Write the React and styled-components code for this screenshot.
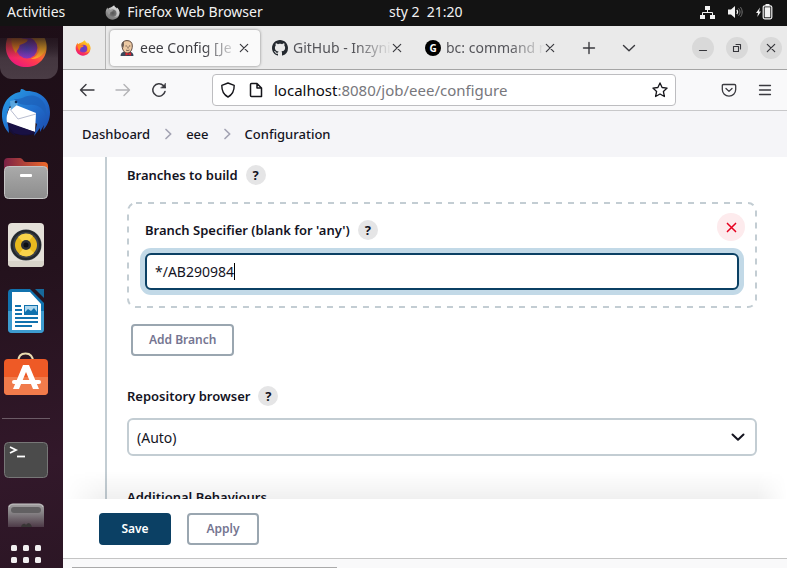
import React, { useState } from "react";
import styled, { createGlobalStyle, css } from "styled-components";

const Global = createGlobalStyle`
  *, *::before, *::after { box-sizing: border-box; }
  body { margin: 0; font-family: "Noto Sans", "Open Sans", sans-serif; font-size: 14px; color: #14141f; }
  button, input, select { font-family: inherit; }
  svg { display: block; flex: none; }
`;

const Desktop = styled.div`
  height: 100vh;
  display: grid;
  grid-template-rows: 26px minmax(0, 1fr);
  grid-template-columns: 63px minmax(0, 1fr);
  overflow: hidden;
`;

/* ---------- top panel ---------- */
const Panel = styled.header`
  grid-column: 1 / -1;
  display: grid;
  grid-template-columns: 382px 1fr auto;
  align-items: center;
  padding: 0 14px 2px 7px;
  background: #131313;
  color: #f2f2f2;
`;
const PanelGroup = styled.div`
  display: flex;
  align-items: center;
  gap: ${(p) => p.$gap}px;
`;
const PanelButton = styled.button`
  display: flex;
  align-items: center;
  gap: 7px;
  border: 0;
  padding: 0;
  background: none;
  color: inherit;
  font-size: 14px;
  line-height: 24px;
  white-space: pre;
`;

/* ---------- dock ---------- */
const Dock = styled.nav`
  display: flex;
  flex-direction: column;
  padding-top: 12px;
  background: linear-gradient(170deg, #1d0e17 0%, #24121d 45%, #32182a 80%, #2c1625 100%);
  overflow: hidden;
`;
const DockItem = styled.button`
  flex: none;
  display: flex;
  align-items: center;
  justify-content: center;
  width: 52px;
  height: 66px;
  padding: 0;
  border: 0;
  background: none;
`;
const ActiveDockItem = styled(DockItem)`
  position: relative;
  align-items: flex-start;
  width: 58px;
  height: 41px;
  margin-bottom: 1px;
  padding-right: 6px;
  border-radius: 0 0 12px 12px;
  background: linear-gradient(#2c1f28, #44363f 50%, #4a3c45);
  overflow: hidden;
  &::after {
    content: "";
    position: absolute;
    inset: 0 0 auto;
    height: 20px;
    background: linear-gradient(#22141dcc, #22141d00);
  }
`;
const DockFirefox = styled.span`
  display: block;
  margin-top: -14px;
`;
const DockRule = styled.hr`
  flex: none;
  width: 48px;
  height: 1px;
  margin: 8px 0 8px 2px;
  border: 0;
  background: #6b5b66;
`;
const TrashItem = styled(DockItem)`
  height: 24px;
  margin-top: 10px;
`;
const AppsItem = styled(DockItem)`
  height: 24px;
  margin-top: 17px;
`;

/* ---------- browser ---------- */
const Browser = styled.div`
  display: flex;
  flex-direction: column;
  min-width: 0;
  min-height: 0;
  background: #f9f9fa;
`;
const TabStrip = styled.div`
  flex: none;
  display: flex;
  align-items: center;
  height: 44px;
  background: #eaeaea;
  border-bottom: 1px solid #a5a5a5;
`;
const PinnedTab = styled.button`
  align-self: stretch;
  display: flex;
  align-items: center;
  justify-content: center;
  width: 43px;
  padding: 0 3px 0 0;
  margin-right: 4px;
  border: 0;
  border-right: 1px solid #b5b5b5;
  background: none;
`;
const Tab = styled.div`
  display: flex;
  align-items: center;
  width: 150px;
  height: 36px;
  margin-right: 3px;
  padding: 0 11px 0 9px;
  border-radius: 4px;
  color: #55555a;
  ${(p) =>
    p.$active &&
    css`
      background: #fafafa;
      color: #3d3d42;
      box-shadow: 0 0 3px #00000075;
    `}
`;
const TabTitle = styled.button`
  flex: 1;
  min-width: 0;
  padding: 0 0 0 5px;
  border: 0;
  background: none;
  color: inherit;
  font-size: 14px;
  line-height: 24px;
  text-align: left;
  white-space: nowrap;
  mask-image: linear-gradient(90deg, #000 calc(100% - 36px), transparent);
`;
const IconButton = styled.button`
  flex: none;
  display: flex;
  align-items: center;
  justify-content: center;
  width: ${(p) => p.$w}px;
  height: 24px;
  padding: 0;
  border: 0;
  background: none;
  color: ${(p) => p.$color || "#3a3a3f"};
`;
const WindowButtons = styled.div`
  display: flex;
  gap: 12px;
  margin-left: auto;
  padding-right: 5px;
`;
const WindowButton = styled.button`
  display: flex;
  align-items: center;
  justify-content: center;
  width: 22px;
  height: 22px;
  padding: 0;
  border: 0;
  border-radius: 50%;
  background: #d9d9d9;
  color: #35353a;
`;
const NavBar = styled.div`
  flex: none;
  display: flex;
  align-items: center;
  height: 41px;
  padding: 0 4px 0 6px;
  border-bottom: 1px solid #c8c8ca;
`;
const NavGroup = styled.div`
  display: flex;
  width: ${(p) => p.$w}px;
  justify-content: ${(p) => p.$justify || "flex-start"};
`;
const AddressBox = styled.div`
  flex: 1;
  display: flex;
  align-items: center;
  height: 32px;
  min-width: 0;
  padding: 0 7px;
  border: 1px solid #bdbdc0;
  border-radius: 4px;
  background: #fff;
  color: #15151a;
`;
const Address = styled.a`
  flex: 1;
  min-width: 0;
  margin-left: 10px;
  color: #77777c;
  font-size: 15px;
  line-height: 24px;
  text-decoration: none;
  white-space: nowrap;
  overflow: hidden;
`;
const Host = styled.span`
  color: #0c0c10;
`;
const FindBar = styled.div`
  flex: none;
  height: 10px;
  padding: 8px 0 0 9px;
  border-top: 1px solid #c4c4c4;
  background: #f9f9fa;
`;
const FindField = styled.div`
  width: 37%;
  height: 2px;
  border-top: 1px solid #aaa;
`;

/* ---------- page ---------- */
const Page = styled.main`
  flex: 1;
  min-height: 0;
  display: flex;
  flex-direction: column;
  background: #fff;
`;
const Crumbs = styled.nav`
  flex: none;
  display: flex;
  align-items: center;
  gap: 12px;
  height: 46px;
  padding: 0 19px;
  background: #f5f5f8;
  color: #a3a3b3;
`;
const Crumb = styled.a`
  color: #14141f;
  font-size: 13px;
  font-weight: 500;
  line-height: 20px;
  text-decoration: none;
`;
const Scroller = styled.div`
  flex: 1;
  min-height: 0;
  overflow: hidden;
  padding: 0 30px 0 42px;
`;
const Section = styled.section`
  padding: 8px 0 40px 20px;
  border-left: 2px solid #c3cdd3;
`;
const LabelRow = styled.div`
  display: flex;
  align-items: center;
  gap: 8px;
  height: 20px;
  margin-top: ${(p) => p.$top || 0}px;
`;
const Label = styled.label`
  font-size: 13px;
  font-weight: 600;
  line-height: 20px;
  white-space: nowrap;
`;
const Help = styled.button`
  width: 20px;
  height: 20px;
  padding: 0;
  border: 0;
  border-radius: 50%;
  background: #e5e5e6;
  color: #14141f;
  font-size: 13px;
  font-weight: 700;
  line-height: 20px;
`;
const BranchBox = styled.div`
  position: relative;
  margin-top: 17px;
  padding: 2px;
`;
const BranchBody = styled.div`
  padding: 16px;
`;
const Dashes = styled.svg`
  position: absolute;
  inset: 0;
  width: 100%;
  height: 100%;
  pointer-events: none;
`;
const DashRect = styled.rect`
  width: calc(100% - 2px);
  height: calc(100% - 2px);
  fill: none;
  stroke: #c3cdd3;
  stroke-width: 2px;
  stroke-dasharray: 6 6;
`;
const Remove = styled.button`
  position: absolute;
  top: 11px;
  right: 12px;
  display: flex;
  align-items: center;
  justify-content: center;
  width: 28px;
  height: 28px;
  padding: 0;
  border: 0;
  border-radius: 50%;
  background: #fdebed;
  color: #e6001f;
`;
const Field = styled.div`
  display: flex;
  align-items: center;
  height: 37px;
  margin-top: 13px;
  padding: 0 8px;
  border: 2px solid #0b4064;
  border-radius: 6px;
  background: #fff;
  box-shadow: 0 0 0 5px #c2d9e7;
`;
const FieldInput = styled.input`
  field-sizing: content;
  min-width: 20px;
  max-width: 100%;
  padding: 0;
  border: 0;
  outline: 0;
  background: none;
  color: #14141f;
  font-size: 14px;
  line-height: 20px;
`;
const Caret = styled.span`
  width: 1px;
  height: 17px;
  background: #000;
`;
const ActionButton = styled.button`
  height: 32px;
  min-width: 72px;
  padding: 0 16px;
  border: 2px solid ${(p) => (p.$primary ? "#0b4064" : "#9aa6b0")};
  border-radius: 4px;
  background: ${(p) => (p.$primary ? "#0b4064" : "#fff")};
  color: ${(p) => (p.$primary ? "#fff" : "#757591")};
  font-size: 12px;
  font-weight: 600;
  line-height: 20px;
`;
const AddRow = styled.div`
  margin: 16px 4px 0;
`;
const SelectWrap = styled.div`
  display: grid;
  align-items: center;
  margin-top: 12px;
  & > * {
    grid-area: 1 / 1;
  }
  & > svg {
    justify-self: end;
    margin-right: 12px;
    pointer-events: none;
  }
`;
const Select = styled.select`
  appearance: none;
  width: 100%;
  height: 38px;
  padding: 0 8px;
  border: 2px solid #c3cdd3;
  border-radius: 6px;
  background: #fff;
  color: #14141f;
  font-size: 14px;
`;
const StickyBar = styled.footer`
  position: relative;
  flex: none;
  display: flex;
  gap: 16px;
  height: 59px;
  padding: 14px 36px;
  background: #fff;
  &::before {
    content: "";
    position: absolute;
    left: 0;
    right: 0;
    bottom: 100%;
    height: 28px;
    background: linear-gradient(#00000000, #0000000f);
    mask-image: linear-gradient(90deg, transparent, #000 44px, #000 calc(100% - 30px), transparent);
    pointer-events: none;
  }
`;

/* ---------- drawings ---------- */
const Stroke = ({ size, w = 1.5, box = 16, children }) => (
  <svg width={size} height={size} viewBox={`0 0 ${box} ${box}`} fill="none" stroke="currentColor" strokeWidth={w} strokeLinecap="round" strokeLinejoin="round" aria-hidden="true">
    {children}
  </svg>
);
const Cross = ({ size = 10, w = 1.2 }) => (
  <Stroke size={size} w={w} box={10}><path d="M1.3 1.3l7.4 7.4M8.7 1.3L1.3 8.7" /></Stroke>
);
const ChevronRight = () => (
  <Stroke size={12} w={1.7} box={12}><path d="M4 1.5L8.7 6 4 10.5" /></Stroke>
);
const ChevronDown = ({ w = 1.4 }) => (
  <Stroke size={14} w={w} box={14}><path d="M1.5 4.5L7 9.8l5.500-5.300" /></Stroke>
);

const Firefox = ({ size, id, gray }) => (
  <svg width={size} height={size} viewBox="0 0 48 48" aria-hidden="true">
    <defs>
      <linearGradient id={id + "a"} x1=".8" y1="0" x2=".25" y2="1">
        <stop offset="0" stopColor={gray ? "#eee" : "#ffe226"} />
        <stop offset=".4" stopColor={gray ? "#bbb" : "#ff9a1f"} />
        <stop offset=".7" stopColor={gray ? "#888" : "#ff3b4e"} />
        <stop offset="1" stopColor={gray ? "#777" : "#e91580"} />
      </linearGradient>
      <radialGradient id={id + "b"}>
        <stop offset="0" stopColor={gray ? "#555" : "#5148c8"} />
        <stop offset="1" stopColor={gray ? "#777" : "#8a35b8"} />
      </radialGradient>
    </defs>
    <path d="M29 1c1 5 5 7 9 11 0-2 0-3-.5-5 6 5 9 11 9 18 0 13-10 22-22.500 22S2 37 2 25C2 18 4 13 8 8c0 2 .5 3 1.500 5C12 10 14 9 18 8c4-1 7-4 11-7z" fill={`url(#${id}a)`} />
    <circle cx="25" cy="26" r="11.500" fill={`url(#${id}b)`} />
    <path d="M9 13c3-1 7 0 9 3 3 0 6 0 8 1-1 4-5 4-9 6 0 4-3 5-4 9-4-5-6-12-4-19z" fill={gray ? "#999" : "#ff8a1c"} />
    <path d="M29 1c1 8 9 11 10 22 .5 7-3 13-10 15 9 1 16-5 17-14C45 15 35 12 29 1z" fill={gray ? "#ccc" : "#ffb824"} opacity=".75" />
  </svg>
);
const Jenkins = () => (
  <svg width="16" height="16" viewBox="0 0 16 16" aria-hidden="true">
    <path d="M1.500 16c0-3 2-4 4-4.500h5c2.500.5 4 2 4 4.500z" fill="#37475a" />
    <path d="M3 6C2.500 2.500 5 .6 8 .6c3.300 0 5.500 2 5.300 5.400 0 4-2 7-5 7C5.500 13 3.500 10.500 3 6z" fill="#ecc9a3" stroke="#4d3a32" strokeWidth=".9" />
    <path d="M3 7c-.8-3 .2-5 1.800-5.700L5 5l-.8 3z" fill="#675a53" />
    <path d="M6.500 6h1.300M10 6h1.300M7 10c1 .7 2.500.6 3.500 0M9 6.500v2" stroke="#4d3a32" strokeWidth=".8" fill="none" />
    <path d="M6.500 12.300l2.700 1.400 2.900-1.400v3.500l-2.900-1.200-2.700 1.200z" fill="#d9232e" />
  </svg>
);
const GitHub = () => (
  <svg width="16" height="16" viewBox="0 0 16 16" fill="#24292f" aria-hidden="true">
    <path d="M8 0C3.580 0 0 3.580 0 8c0 3.540 2.290 6.530 5.470 7.590.4.070.55-.17.55-.38 0-.19-.01-.82-.01-1.490-2.010.37-2.530-.49-2.690-.94-.09-.23-.48-.94-.82-1.130-.28-.15-.68-.52-.01-.53.63-.01 1.080.58 1.230.82.72 1.210 1.870.87 2.330.66.070-.52.28-.87.51-1.070-1.780-.2-3.640-.89-3.640-3.950 0-.87.31-1.590.82-2.150-.08-.2-.36-1.020.08-2.120 0 0 .67-.21 2.200.82.64-.18 1.320-.27 2-.27s1.360.09 2 .27c1.530-1.040 2.200-.82 2.200-.82.44 1.100.16 1.920.08 2.120.51.56.82 1.270.82 2.150 0 3.070-1.870 3.750-3.650 3.950.29.25.54.73.54 1.480 0 1.070-.01 1.930-.01 2.200 0 .21.15.46.55.38A8 8 0 0 0 16 8c0-4.420-3.580-8-8-8z" />
  </svg>
);
const GMark = styled.span`
  flex: none;
  width: 16px;
  height: 16px;
  border-radius: 50%;
  background: #000;
  color: #fff;
  font-size: 10px;
  font-weight: 700;
  line-height: 16px;
  text-align: center;
`;
const Network = () => (
  <svg width="15" height="13" viewBox="0 0 15 13" fill="#f2f2f2" aria-hidden="true">
    <path d="M5 0h5v4H5zM0 9h5v4H0zM10 9h5v4h-5z" />
    <path d="M7.500 4v2.500M2.500 9V6.500h10V9" fill="none" stroke="#f2f2f2" />
  </svg>
);
const Volume = () => (
  <svg width="15" height="14" viewBox="0 0 15 14" aria-hidden="true">
    <path d="M0 4.500h3L7 1v12L3 9.500H0z" fill="#f2f2f2" />
    <path d="M8.800 5c1 1.200 1 2.800 0 4" fill="none" stroke="#f2f2f2" strokeWidth="1.200" />
    <path d="M10.500 3.300c2 2.200 2 5.200 0 7.400M12.500 2.200c2.200 3 2.200 6.600 0 9.600" fill="none" stroke="#777" />
  </svg>
);
const Battery = () => (
  <svg width="17" height="16" viewBox="0 0 17 16" aria-hidden="true">
    <path d="M4 3.500L0 9h2l-.7 4L5 7.500H3z" fill="#f2f2f2" />
    <path d="M9.500 0h4v2h-4z" fill="#f2f2f2" />
    <rect x="7.200" y="1.800" width="8.600" height="13" rx="1.500" fill="none" stroke="#f2f2f2" strokeWidth="1.200" />
    <rect x="8.700" y="3.300" width="5.600" height="10" fill="#f2f2f2" />
  </svg>
);
const Thunderbird = () => (
  <svg width="48" height="48" viewBox="0 0 48 48" aria-hidden="true">
    <defs>
      <linearGradient id="tb" x1="0" y1="0" x2="1" y2="1">
        <stop offset="0" stopColor="#2aa1e6" />
        <stop offset=".5" stopColor="#2172d0" />
        <stop offset="1" stopColor="#1b47a8" />
      </linearGradient>
    </defs>
    <path d="M1 15C-2 27 2 41 14 47l-2-3c6 3 17 4 24-1z" fill="#160f38" />
    <path d="M19 0c3 0 4 2 6 2 14 0 23 9 23 21 0 8-3 14-7 18l1-5-4 7v-4l-6 8 3-12L8 17 5 24l2 20C0 37-2 25 2 16 5 8 12 4 18 3z" fill="url(#tb)" />
    <path d="M12 10c9 1 12-5 21-3 9 3 12 10 11 20-3-8-8-12-17-11-7 0-11-1-15-6z" fill="#1d5fb8" opacity=".7" />
    <path d="M8 19l6-3 20 8-1 19-28-9c-1-5 0-11 3-15z" fill="#fff" />
    <path d="M5 33l28 10c-5 3-14 4-21 1-3-3-6-7-7-11z" fill="#191144" />
    <path d="M7 19l9 11 18-5" fill="none" stroke="#b8bdd0" />
    <path d="M8 12l5-1 3 4-7 6z" fill="#5aa7df" />
    <circle cx="14" cy="13" r="1.300" fill="#0b2b55" />
  </svg>
);
const Files = () => (
  <svg width="46" height="42" viewBox="0 0 46 42" aria-hidden="true">
    <defs>
      <linearGradient id="fa"><stop stopColor="#7b2146" /><stop offset="1" stopColor="#ef6a2a" /></linearGradient>
      <linearGradient id="fb" x1="0" y1="0" x2="0" y2="1"><stop stopColor="#aaa" /><stop offset="1" stopColor="#8d8d8d" /></linearGradient>
    </defs>
    <path d="M1 4a4 4 0 0 1 4-4h12c3 0 3 4 6 4h18a4 4 0 0 1 4 4v12H1z" fill="url(#fa)" />
    <rect x="1.500" y="8.500" width="43" height="32" rx="4" fill="url(#fb)" stroke="#c6c6c6" />
    <rect x="17" y="16" width="12" height="3" rx="1" fill="#fff" />
  </svg>
);
const Rhythmbox = () => (
  <svg width="36" height="44" viewBox="0 0 36 44" aria-hidden="true">
    <rect width="36" height="44" rx="4" fill="#e4e0d8" />
    <path d="M0 38h36v2a4 4 0 0 1-4 4H4a4 4 0 0 1-4-4z" fill="#d8d4ca" />
    <circle cx="18" cy="22" r="15.500" fill="#3b4047" />
    <circle cx="18" cy="22" r="14" fill="none" stroke="#22262b" strokeWidth="2" />
    <circle cx="18" cy="22" r="11" fill="#e8b91e" />
    <path d="M18 22L10 14a11 11 0 0 1 15-1zM18 22l8 8a11 11 0 0 1-15 1z" fill="#f8d34a" />
    <circle cx="18" cy="22" r="5" fill="#2b2f35" />
    <circle cx="18" cy="22" r="2.500" fill="#0d0f12" />
  </svg>
);
const Writer = () => (
  <svg width="36" height="44" viewBox="0 0 36 44" aria-hidden="true">
    <path d="M4 0h18l14 14v26a4 4 0 0 1-4 4H4a4 4 0 0 1-4-4V4a4 4 0 0 1 4-4z" fill="#1172ae" />
    <path d="M0 22h36v18a4 4 0 0 1-4 4H4a4 4 0 0 1-4-4z" fill="#3d9bcf" />
    <path d="M4 3h18l11 12v26H4z" fill="#fff" />
    <path d="M27 0h9v9z" fill="#17699b" />
    <path d="M7 17h6M7 21h7M7 25h7M7 29h23M7 33h23M7 37h17" stroke="#1172ae" strokeWidth="1.800" />
    <rect x="16.500" y="16.500" width="13" height="9" fill="#aed7ee" stroke="#1172ae" />
    <path d="M17 25v-2l3-3 3 2 3-3 3 4v2z" fill="#1172ae" />
  </svg>
);
const Software = () => (
  <svg width="46" height="50" viewBox="0 0 46 50" aria-hidden="true">
    <path d="M15.500 10C15 4 18 1.500 22.500 1.500S30 4 30 10" fill="none" stroke="#eadbb0" strokeWidth="2" />
    <rect x="1" y="7" width="44" height="36" rx="4" fill="#ee5a26" />
    <path d="M1 25h44v14a4 4 0 0 1-4 4H5a4 4 0 0 1-4-4z" fill="#f17b4b" />
    <path d="M20 13h6l10 24h-6l-7-17-7 17h-6z" fill="#fff" />
    <path d="M11 30h25" stroke="#fff" strokeWidth="4" strokeLinecap="round" />
  </svg>
);
const Terminal = () => (
  <svg width="46" height="38" viewBox="0 0 46 38" aria-hidden="true">
    <rect x="1.500" y="1.500" width="43" height="35" rx="4" fill="#4b4b4b" stroke="#777" />
    <path d="M7 6l6 3-6 3" fill="none" stroke="#fff" strokeWidth="1.800" />
    <path d="M14 15.500h8" stroke="#fff" strokeWidth="1.800" />
  </svg>
);
const Trash = () => (
  <svg width="36" height="24" viewBox="0 0 36 24" aria-hidden="true">
    <defs>
      <linearGradient id="tr" x1="0" y1="0" x2="0" y2="1"><stop stopColor="#a2a0a1" /><stop offset=".4" stopColor="#858184" /><stop offset="1" stopColor="#4d3a47" /></linearGradient>
    </defs>
    <path d="M0 24V5a4 4 0 0 1 4-4h28a4 4 0 0 1 4 4v19z" fill="url(#tr)" />
    <path d="M1 4c1-2 2-3 4-3h26c2 0 3 1 4 3" stroke="#c8c8c8" fill="none" />
    <rect x="3" y="4" width="30" height="6" rx="3" fill="#626062" />
    <path d="M13 24c1-4 4-4 5-2 2-3 5-2 6 2z" fill="#383535" />
  </svg>
);
const AppGrid = () => (
  <svg width="32" height="24" viewBox="0 0 32 24" fill="#f1eff0" aria-hidden="true">
    {[1, 13, 25].map((x) => [1, 13].map((y) => <rect key={x + "-" + y} x={x} y={y} width="6" height="6" rx="1.500" />))}
  </svg>
);

const TABS = [
  { title: "eee Config [Je", icon: <Jenkins />, active: true },
  { title: "GitHub - Inzyni", icon: <GitHub /> },
  { title: "bc: command n", icon: <GMark>G</GMark> },
];
const DOCK = [
  ["Thunderbird", Thunderbird],
  ["Files", Files],
  ["Rhythmbox", Rhythmbox],
  ["LibreOffice Writer", Writer],
  ["Ubuntu Software", Software],
];

export default function App() {
  const [branch, setBranch] = useState("*/AB290984");
  return (
    <Desktop>
      <Global />
      <Panel>
        <PanelGroup $gap={40}>
          <PanelButton>Activities</PanelButton>
          <PanelButton><Firefox size={15} id="fp" gray />Firefox Web Browser</PanelButton>
        </PanelGroup>
        <PanelButton>{"sty 2  21:20"}</PanelButton>
        <PanelGroup $gap={13}><Network /><Volume /><Battery /></PanelGroup>
      </Panel>

      <Dock aria-label="Dock">
        <ActiveDockItem aria-label="Firefox"><DockFirefox><Firefox size={44} id="fd" /></DockFirefox></ActiveDockItem>
        {DOCK.map(([name, Icon]) => <DockItem key={name} aria-label={name}><Icon /></DockItem>)}
        <DockRule />
        <DockItem aria-label="Terminal"><Terminal /></DockItem>
        <TrashItem aria-label="Trash"><Trash /></TrashItem>
        <AppsItem aria-label="Show applications"><AppGrid /></AppsItem>
      </Dock>

      <Browser>
        <TabStrip>
          <PinnedTab aria-label="Firefox View"><Firefox size={16} id="ft" /></PinnedTab>
          {TABS.map((t) => (
            <Tab key={t.title} $active={t.active}>
              {t.icon}
              <TabTitle>{t.title}</TabTitle>
              <IconButton $w={10} aria-label="Close tab"><Cross /></IconButton>
            </Tab>
          ))}
          <IconButton $w={40} aria-label="New tab"><Stroke size={14} w={1.4} box={14}><path d="M7 1.500v11M1.500 7h11" /></Stroke></IconButton>
          <IconButton $w={40} aria-label="List all tabs"><ChevronDown /></IconButton>
          <WindowButtons>
            <WindowButton aria-label="Minimize"><Stroke size={10} w={1.200} box={10}><path d="M1.500 7.500h7" /></Stroke></WindowButton>
            <WindowButton aria-label="Restore"><Stroke size={10} w={1.100} box={10}><path d="M1.500 3.500h5v5h-5zM4 1.500h4.500V6" /></Stroke></WindowButton>
            <WindowButton aria-label="Close"><Cross /></WindowButton>
          </WindowButtons>
        </TabStrip>
        <NavBar>
          <NavGroup $w={143}>
            <IconButton $w={36} aria-label="Back"><Stroke size={16} w={1.400}><path d="M15 8H1.500M7 2.500L1.500 8 7 13.500" /></Stroke></IconButton>
            <IconButton $w={36} $color="#b3b3b6" aria-label="Forward"><Stroke size={16} w={1.400}><path d="M1 8h13.500M9 2.500L14.500 8 9 13.500" /></Stroke></IconButton>
            <IconButton $w={36} aria-label="Reload"><Stroke size={16} w={1.500}><path d="M14 9.500A6.200 6.200 0 1 1 12.500 3.700L14.300 5.500" /><path d="M14.500 1.500V6H10z" fill="currentColor" strokeWidth=".6" /></Stroke></IconButton>
          </NavGroup>
          <AddressBox>
            <Stroke size={16} w={1.400}><path d="M8 1l6.200 2.300C14.300 8.500 13 12.500 8 15 3 12.500 1.700 8.500 1.800 3.300z" /></Stroke>
            <NavGroup $w={28} $justify="flex-end"><Stroke size={16} w={1.500}><path d="M3.500 1.500H9l4.500 4.500v8.500H3.500q-1 0-1-1v-11q0-1 1-1zM9 1.500V6h4.500" /></Stroke></NavGroup>
            <Address href="http://localhost:8080/job/eee/configure"><Host>localhost</Host>:8080/job/eee/configure</Address>
            <IconButton $w={16} $color="#15151a" aria-label="Bookmark this page"><Stroke size={16} w={1.300}><path d="M8 .9l2.100 4.600 5 .6-3.700 3.400 1 5L8 12l-4.400 2.500 1-5L.9 6.100l5-.6z" /></Stroke></IconButton>
          </AddressBox>
          <NavGroup $w={107} $justify="flex-end">
            <IconButton $w={36} aria-label="Save to Pocket"><Stroke size={16} w={1.300}><path d="M2.500 2.500h11q1.200 0 1.200 1.200V7.500a6.700 6.700 0 0 1-13.400 0V3.700q0-1.200 1.200-1.200zM5 6.500l3 2.900 3-2.900" /></Stroke></IconButton>
            <IconButton $w={36} aria-label="Menu"><Stroke size={14} w={1.300} box={14}><path d="M1.500 2.500h11M1.500 7h11M1.500 11.500h11" /></Stroke></IconButton>
          </NavGroup>
        </NavBar>

        <Page>
          <Crumbs aria-label="Breadcrumbs">
            <Crumb href="#dashboard">Dashboard</Crumb>
            <ChevronRight />
            <Crumb href="#eee">eee</Crumb>
            <ChevronRight />
            <Crumb href="#configure">Configuration</Crumb>
          </Crumbs>
          <Scroller>
            <Section>
              <LabelRow><Label as="span">Branches to build</Label><Help aria-label="Help: Branches to build">?</Help></LabelRow>
              <BranchBox>
                <Dashes aria-hidden="true"><DashRect x="1" y="1" rx="8" /></Dashes>
                <BranchBody>
                  <LabelRow><Label htmlFor="branch">Branch Specifier (blank for 'any')</Label><Help aria-label="Help: Branch Specifier">?</Help></LabelRow>
                  <Field>
                    <FieldInput id="branch" value={branch} onChange={(e) => setBranch(e.target.value)} />
                    <Caret />
                  </Field>
                </BranchBody>
                <Remove aria-label="Delete branch"><Cross size={11} w={1.400} /></Remove>
              </BranchBox>
              <AddRow><ActionButton>Add Branch</ActionButton></AddRow>
              <LabelRow $top={30}><Label htmlFor="browser">Repository browser</Label><Help aria-label="Help: Repository browser">?</Help></LabelRow>
              <SelectWrap>
                <Select id="browser"><option>(Auto)</option></Select>
                <ChevronDown w={2} />
              </SelectWrap>
              <LabelRow $top={31}><Label as="span">Additional Behaviours</Label></LabelRow>
            </Section>
          </Scroller>
          <StickyBar>
            <ActionButton $primary>Save</ActionButton>
            <ActionButton>Apply</ActionButton>
          </StickyBar>
        </Page>
        <FindBar><FindField /></FindBar>
      </Browser>
    </Desktop>
  );
}
